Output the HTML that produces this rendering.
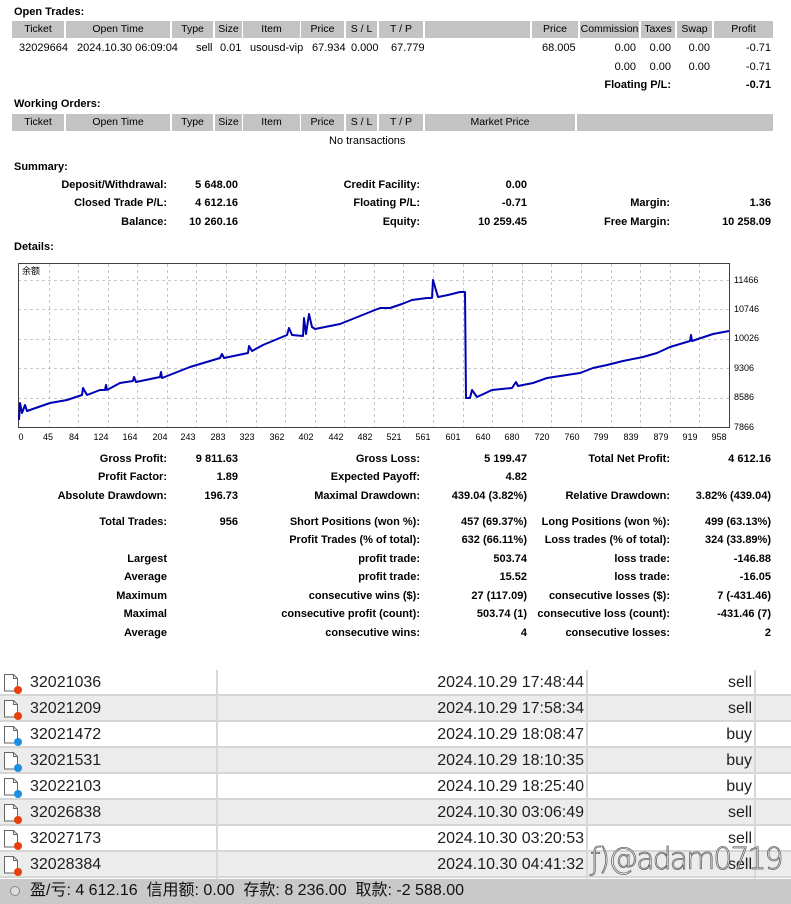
<!DOCTYPE html>
<html><head><meta charset="utf-8">
<style>
*{margin:0;padding:0;box-sizing:border-box}
body{width:791px;height:904px;position:relative;background:#fff;font-family:"Liberation Sans","Noto Sans CJK SC",sans-serif;font-size:11px;color:#000;overflow:hidden}
.a{position:absolute;white-space:nowrap;line-height:14px}
.b{font-weight:bold}
.h{position:absolute;background:#c3c3c3;height:17px;line-height:17px;text-align:center;font-size:10.5px;overflow:hidden;white-space:nowrap}
.r{text-align:right}
.st{font-weight:bold;font-size:11px}
.row{position:absolute;left:0;width:791px;height:26px;border-bottom:2px solid #d6d6d6;font-size:16px;line-height:24px;color:#1e1e1e}
.g{background:#ececec}
.vl{position:absolute;top:670px;height:209px;width:2px;background:#d8d8d8}
</style></head><body>
<div class="a b" style="left:14px;top:5px">Open Trades:</div>
<div class="h" style="left:12px;top:21px;width:52px">Ticket</div>
<div class="h" style="left:66px;top:21px;width:104px">Open Time</div>
<div class="h" style="left:172px;top:21px;width:41px">Type</div>
<div class="h" style="left:215px;top:21px;width:27px">Size</div>
<div class="h" style="left:243px;top:21px;width:57px">Item</div>
<div class="h" style="left:301px;top:21px;width:43px">Price</div>
<div class="h" style="left:346px;top:21px;width:31px">S / L</div>
<div class="h" style="left:379px;top:21px;width:44px">T / P</div>
<div class="h" style="left:425px;top:21px;width:105px"></div>
<div class="h" style="left:532px;top:21px;width:46px">Price</div>
<div class="h" style="left:580px;top:21px;width:59px">Commission</div>
<div class="h" style="left:641px;top:21px;width:34px">Taxes</div>
<div class="h" style="left:677px;top:21px;width:35px">Swap</div>
<div class="h" style="left:714px;top:21px;width:59px">Profit</div>
<div class="a" style="left:19px;top:41px">32029664</div>
<div class="a" style="left:77px;top:41px">2024.10.30 06:09:04</div>
<div class="a" style="left:196px;top:41px">sell</div>
<div class="a" style="left:220px;top:41px">0.01</div>
<div class="a" style="left:250px;top:41px">usousd-vip</div>
<div class="a" style="left:312px;top:41px">67.934</div>
<div class="a" style="left:351px;top:41px">0.000</div>
<div class="a" style="left:391px;top:41px">67.779</div>
<div class="a" style="left:542px;top:41px">68.005</div>
<div class="a r" style="right:155px;top:41px">0.00</div>
<div class="a r" style="right:120px;top:41px">0.00</div>
<div class="a r" style="right:81px;top:41px">0.00</div>
<div class="a r" style="right:20px;top:41px">-0.71</div>
<div class="a r" style="right:155px;top:60px">0.00</div>
<div class="a r" style="right:120px;top:60px">0.00</div>
<div class="a r" style="right:81px;top:60px">0.00</div>
<div class="a r" style="right:20px;top:60px">-0.71</div>
<div class="a b r" style="right:120px;top:78px">Floating P/L:</div>
<div class="a b r" style="right:20px;top:78px">-0.71</div>

<div class="a b" style="left:14px;top:97px">Working Orders:</div>
<div class="h" style="left:12px;top:114px;width:52px">Ticket</div>
<div class="h" style="left:66px;top:114px;width:104px">Open Time</div>
<div class="h" style="left:172px;top:114px;width:41px">Type</div>
<div class="h" style="left:215px;top:114px;width:27px">Size</div>
<div class="h" style="left:243px;top:114px;width:57px">Item</div>
<div class="h" style="left:301px;top:114px;width:43px">Price</div>
<div class="h" style="left:346px;top:114px;width:31px">S / L</div>
<div class="h" style="left:379px;top:114px;width:44px">T / P</div>
<div class="h" style="left:425px;top:114px;width:150px">Market Price</div>
<div class="h" style="left:577px;top:114px;width:196px"></div>
<div class="a" style="left:329px;top:134px">No transactions</div>

<div class="a st" style="left:14px;top:160px">Summary:</div>
<div class="a st r" style="right:624px;top:178px">Deposit/Withdrawal:</div>
<div class="a st r" style="right:553px;top:178px">5 648.00</div>
<div class="a st r" style="right:371px;top:178px">Credit Facility:</div>
<div class="a st r" style="right:264px;top:178px">0.00</div>
<div class="a st r" style="right:624px;top:196px">Closed Trade P/L:</div>
<div class="a st r" style="right:553px;top:196px">4 612.16</div>
<div class="a st r" style="right:371px;top:196px">Floating P/L:</div>
<div class="a st r" style="right:264px;top:196px">-0.71</div>
<div class="a st r" style="right:121px;top:196px">Margin:</div>
<div class="a st r" style="right:20px;top:196px">1.36</div>
<div class="a st r" style="right:624px;top:215px">Balance:</div>
<div class="a st r" style="right:553px;top:215px">10 260.16</div>
<div class="a st r" style="right:371px;top:215px">Equity:</div>
<div class="a st r" style="right:264px;top:215px">10 259.45</div>
<div class="a st r" style="right:121px;top:215px">Free Margin:</div>
<div class="a st r" style="right:20px;top:215px">10 258.09</div>
<div class="a st" style="left:14px;top:240px">Details:</div>

<svg style="position:absolute;left:0;top:0" width="791" height="450">
<g stroke="#c8c8c8" stroke-width="1" stroke-dasharray="3,3" fill="none">
<path d="M18 280.5H729M18 309.5H729M18 339.5H729M18 368.5H729M18 398.5H729"/>
<path d="M49.5 264V428M78.5 264V428M108.5 264V428M137.5 264V428M167.5 264V428M196.5 264V428M226.5 264V428M256.5 264V428M285.5 264V428M315.5 264V428M344.5 264V428M374.5 264V428M403.5 264V428M433.5 264V428M463.5 264V428M492.5 264V428M522.5 264V428M551.5 264V428M581.5 264V428M611.5 264V428M640.5 264V428M670.5 264V428M699.5 264V428"/>
</g>
<rect x="18.5" y="263.5" width="711" height="164" fill="none" stroke="#404040"/>
<text x="22" y="274" font-size="9" font-family="Noto Sans CJK SC,sans-serif">余额</text>
<polyline fill="none" stroke="#0000b4" stroke-width="2" stroke-linejoin="round" points="19,420 20,403 22,413 25,405 27,411 50,403 67,400 82,395 83,388 87,395 100,390 105,390 106,385 107,390 120,383 133,381 134,377 136,382 160,377 161,372 162,378 190,367 220,358 222,354 224,358 248,353 249,346 252,351 263,345 287,335 289,328 292,335 303,336 304,318 306,334 309,314 312,327 315,329 340,324 380,308 390,308 402,304 412,300 427,298 432,298 433,280 438,297 448,295 460,292 465,292 466,398 470,398 472,390 477,397 492,390 512,388 516,382 518,386 533,383 547,378 580,373 593,368 607,365 623,361 643,357 657,353 670,347 690,341 691,335 692,341 713,334 729,331"/>
<g font-size="9" font-family="Liberation Sans,sans-serif" text-anchor="middle">
<text x="21" y="440">0</text><text x="48" y="440">45</text><text x="74" y="440">84</text><text x="101" y="440">124</text><text x="130" y="440">164</text><text x="160" y="440">204</text><text x="188" y="440">243</text><text x="218" y="440">283</text><text x="247" y="440">323</text><text x="277" y="440">362</text><text x="306" y="440">402</text><text x="336" y="440">442</text><text x="365" y="440">482</text><text x="394" y="440">521</text><text x="423" y="440">561</text><text x="453" y="440">601</text><text x="483" y="440">640</text><text x="512" y="440">680</text><text x="542" y="440">720</text><text x="572" y="440">760</text><text x="601" y="440">799</text><text x="631" y="440">839</text><text x="661" y="440">879</text><text x="690" y="440">919</text><text x="719" y="440">958</text>
</g>
<g font-size="9" font-family="Liberation Sans,sans-serif">
<text x="734" y="283">11466</text><text x="734" y="312">10746</text><text x="734" y="341">10026</text><text x="734" y="371">9306</text><text x="734" y="400">8586</text><text x="734" y="430">7866</text>
</g>
</svg>

<div class="a st r" style="right:624px;top:452px">Gross Profit:</div>
<div class="a st r" style="right:553px;top:452px">9 811.63</div>
<div class="a st r" style="right:371px;top:452px">Gross Loss:</div>
<div class="a st r" style="right:264px;top:452px">5 199.47</div>
<div class="a st r" style="right:121px;top:452px">Total Net Profit:</div>
<div class="a st r" style="right:20px;top:452px">4 612.16</div>
<div class="a st r" style="right:624px;top:470px">Profit Factor:</div>
<div class="a st r" style="right:553px;top:470px">1.89</div>
<div class="a st r" style="right:371px;top:470px">Expected Payoff:</div>
<div class="a st r" style="right:264px;top:470px">4.82</div>
<div class="a st r" style="right:624px;top:489px">Absolute Drawdown:</div>
<div class="a st r" style="right:553px;top:489px">196.73</div>
<div class="a st r" style="right:371px;top:489px">Maximal Drawdown:</div>
<div class="a st r" style="right:264px;top:489px">439.04 (3.82%)</div>
<div class="a st r" style="right:121px;top:489px">Relative Drawdown:</div>
<div class="a st r" style="right:20px;top:489px">3.82% (439.04)</div>
<div class="a st r" style="right:624px;top:515px">Total Trades:</div>
<div class="a st r" style="right:553px;top:515px">956</div>
<div class="a st r" style="right:371px;top:515px">Short Positions (won %):</div>
<div class="a st r" style="right:264px;top:515px">457 (69.37%)</div>
<div class="a st r" style="right:121px;top:515px">Long Positions (won %):</div>
<div class="a st r" style="right:20px;top:515px">499 (63.13%)</div>
<div class="a st r" style="right:371px;top:533px">Profit Trades (% of total):</div>
<div class="a st r" style="right:264px;top:533px">632 (66.11%)</div>
<div class="a st r" style="right:121px;top:533px">Loss trades (% of total):</div>
<div class="a st r" style="right:20px;top:533px">324 (33.89%)</div>
<div class="a st r" style="right:624px;top:552px">Largest</div>
<div class="a st r" style="right:371px;top:552px">profit trade:</div>
<div class="a st r" style="right:264px;top:552px">503.74</div>
<div class="a st r" style="right:121px;top:552px">loss trade:</div>
<div class="a st r" style="right:20px;top:552px">-146.88</div>
<div class="a st r" style="right:624px;top:570px">Average</div>
<div class="a st r" style="right:371px;top:570px">profit trade:</div>
<div class="a st r" style="right:264px;top:570px">15.52</div>
<div class="a st r" style="right:121px;top:570px">loss trade:</div>
<div class="a st r" style="right:20px;top:570px">-16.05</div>
<div class="a st r" style="right:624px;top:589px">Maximum</div>
<div class="a st r" style="right:371px;top:589px">consecutive wins ($):</div>
<div class="a st r" style="right:264px;top:589px">27 (117.09)</div>
<div class="a st r" style="right:121px;top:589px">consecutive losses ($):</div>
<div class="a st r" style="right:20px;top:589px">7 (-431.46)</div>
<div class="a st r" style="right:624px;top:607px">Maximal</div>
<div class="a st r" style="right:371px;top:607px">consecutive profit (count):</div>
<div class="a st r" style="right:264px;top:607px">503.74 (1)</div>
<div class="a st r" style="right:121px;top:607px">consecutive loss (count):</div>
<div class="a st r" style="right:20px;top:607px">-431.46 (7)</div>
<div class="a st r" style="right:624px;top:626px">Average</div>
<div class="a st r" style="right:371px;top:626px">consecutive wins:</div>
<div class="a st r" style="right:264px;top:626px">4</div>
<div class="a st r" style="right:121px;top:626px">consecutive losses:</div>
<div class="a st r" style="right:20px;top:626px">2</div>

<div class="row" style="top:670px"></div>
<div class="row g" style="top:696px"></div>
<div class="row" style="top:722px"></div>
<div class="row g" style="top:748px"></div>
<div class="row" style="top:774px"></div>
<div class="row g" style="top:800px"></div>
<div class="row" style="top:826px"></div>
<div class="row g" style="top:852px"></div>
<div class="vl" style="left:216px"></div>
<div class="vl" style="left:586px"></div>
<div class="vl" style="left:754px"></div>

<svg style="position:absolute;left:0;top:670px" width="30" height="210">
<defs>
<g id="d"><path d="M4.5 4.5h9l4 4v12.5h-13z" fill="#fff" stroke="#666"/><path d="M13.5 4.5v4h4" fill="none" stroke="#666"/></g>
</defs>
<use href="#d" y="0"/><circle cx="18" cy="20" r="4" fill="#e8400c"/>
<use href="#d" y="26"/><circle cx="18" cy="46" r="4" fill="#e8400c"/>
<use href="#d" y="52"/><circle cx="18" cy="72" r="4" fill="#1e8ee0"/>
<use href="#d" y="78"/><circle cx="18" cy="98" r="4" fill="#1e8ee0"/>
<use href="#d" y="104"/><circle cx="18" cy="124" r="4" fill="#1e8ee0"/>
<use href="#d" y="130"/><circle cx="18" cy="150" r="4" fill="#e8400c"/>
<use href="#d" y="156"/><circle cx="18" cy="176" r="4" fill="#e8400c"/>
<use href="#d" y="182"/><circle cx="18" cy="202" r="4" fill="#e8400c"/>
</svg>

<div style="position:absolute;left:0;top:670px;width:791px;font-size:16px;line-height:26px;color:#1e1e1e">
<div style="position:absolute;left:30px;top:0">32021036</div><div style="position:absolute;right:207px;top:0">2024.10.29 17:48:44</div><div style="position:absolute;right:39px;top:0">sell</div>
<div style="position:absolute;left:30px;top:26px">32021209</div><div style="position:absolute;right:207px;top:26px">2024.10.29 17:58:34</div><div style="position:absolute;right:39px;top:26px">sell</div>
<div style="position:absolute;left:30px;top:52px">32021472</div><div style="position:absolute;right:207px;top:52px">2024.10.29 18:08:47</div><div style="position:absolute;right:39px;top:52px">buy</div>
<div style="position:absolute;left:30px;top:78px">32021531</div><div style="position:absolute;right:207px;top:78px">2024.10.29 18:10:35</div><div style="position:absolute;right:39px;top:78px">buy</div>
<div style="position:absolute;left:30px;top:104px">32022103</div><div style="position:absolute;right:207px;top:104px">2024.10.29 18:25:40</div><div style="position:absolute;right:39px;top:104px">buy</div>
<div style="position:absolute;left:30px;top:130px">32026838</div><div style="position:absolute;right:207px;top:130px">2024.10.30 03:06:49</div><div style="position:absolute;right:39px;top:130px">sell</div>
<div style="position:absolute;left:30px;top:156px">32027173</div><div style="position:absolute;right:207px;top:156px">2024.10.30 03:20:53</div><div style="position:absolute;right:39px;top:156px">sell</div>
<div style="position:absolute;left:30px;top:182px">32028384</div><div style="position:absolute;right:207px;top:182px">2024.10.30 04:41:32</div><div style="position:absolute;right:39px;top:182px">sell</div>
</div>
<div style="position:absolute;left:590px;top:842px;font-size:30px;line-height:36px;color:rgba(255,255,255,0.85);-webkit-text-stroke:0.8px #666;font-family:'DejaVu Sans',sans-serif;font-weight:300;letter-spacing:-2px">ƒ)@adam0719</div>

<div style="position:absolute;left:0;top:879px;width:791px;height:25px;background:#c9c9c9"></div>
<div style="position:absolute;left:10px;top:886px;width:10px;height:10px;border-radius:50%;border:1.5px solid #888;background:#ddd"></div>
<div class="a" style="left:30px;top:880px;font-size:16px;line-height:22px;color:#111">盈/亏: 4 612.16&nbsp; 信用额: 0.00&nbsp; 存款: 8 236.00&nbsp; 取款: -2 588.00</div>
</body></html>
